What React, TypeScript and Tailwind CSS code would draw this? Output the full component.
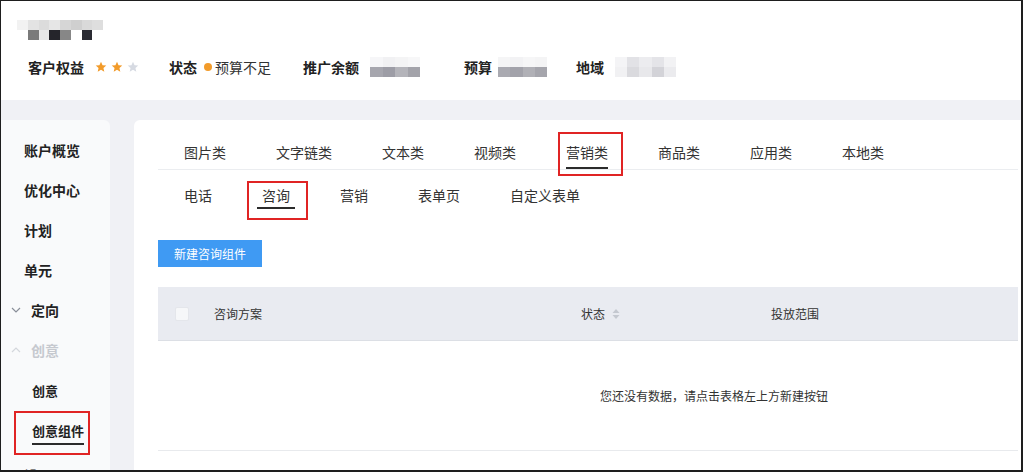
const font = "font-['Noto_Sans_CJK_SC','Noto_Sans',sans-serif]"

const nameRow1 = ['#f2f2f2', '#e3e3e3', '#dcdcdc', '#e6e6e6', '#d6d6d6', '#cfcfcf', '#d9d9d9', '#dedede']
const nameRow2 = ['#ffffff', '#7a7a7a', '#e8e8e8', '#25252b', '#878787', '#ffffff', '#2a2b33', '#ffffff']

const Blur = ({ w, top, bottom }: { w: number; top: string[]; bottom: string[] }) => (
  <div className="flex flex-col" style={{ width: w }}>
    <div className="flex h-[10px]">
      {top.map((c, i) => (
        <div key={i} className="flex-1" style={{ background: c }} />
      ))}
    </div>
    <div className="flex h-[10px]">
      {bottom.map((c, i) => (
        <div key={i} className="flex-1" style={{ background: c }} />
      ))}
    </div>
  </div>
)

const Star = ({ on }: { on: boolean }) => (
  <svg width="12" height="12" viewBox="0 0 24 24">
    <path
      d="M12 1.5l3.1 7 7.4.6-5.6 4.9 1.7 7.5L12 17.6l-6.6 3.9 1.7-7.5L1.5 9.1l7.4-.6z"
      fill={on ? '#f29b2a' : '#d6dae2'}
    />
  </svg>
)

const Chevron = ({ up, color }: { up?: boolean; color: string }) => (
  <svg width="10" height="10" viewBox="0 0 10 10">
    <path d={up ? 'M1 7l4-4 4 4' : 'M1 3l4 4 4-4'} fill="none" stroke={color} strokeWidth="1.2" />
  </svg>
)

const topTabs = ['图片类', '文字链类', '文本类', '视频类', '营销类', '商品类', '应用类', '本地类']
const subTabs = ['电话', '咨询', '营销', '表单页', '自定义表单']

export default function App() {
  return (
    <div className={`${font} w-[1023px] h-[472px] overflow-hidden bg-[#f0f1f5] border-t border-l border-r-2 border-b-2 border-[#1e1e1e] text-[#222]`}>
      {/* header */}
      <div className="h-[99px] bg-white pt-[19px] pl-[16px]">
        <Blur w={86} top={nameRow1} bottom={nameRow2} />
        <div className="mt-[17px] ml-[11px] flex items-center h-5 text-[14px] leading-5">
          <span className="font-bold">客户权益</span>
          <div className="ml-[11px] flex gap-[4px]">
            <Star on />
            <Star on />
            <Star on={false} />
          </div>
          <span className="ml-[30px] font-bold">状态</span>
          <span className="ml-[7px] w-[8px] h-[8px] rounded-full bg-[#f29b2a]" />
          <span className="ml-[3px] text-[#333]">预算不足</span>
          <span className="ml-[32px] font-bold">推广余额</span>
          <div className="ml-[11px]">
            <Blur w={50} top={['#f6f6f8', '#f1f1f3', '#f4f4f5', '#f7f7f8']} bottom={['#a6a6ae', '#9d9da6', '#b4b4ba', '#a3a3aa']} />
          </div>
          <span className="ml-[44px] font-bold">预算</span>
          <div className="ml-[6px]">
            <Blur w={49} top={['#f5f5f6', '#f2f2f4', '#f6f6f7', '#f4f4f5']} bottom={['#aaaab1', '#a2a2aa', '#b0b0b6', '#a5a5ac']} />
          </div>
          <span className="ml-[29px] font-bold">地域</span>
          <div className="ml-[11px]">
            <Blur w={61} top={['#f4f4f6', '#e2e2e6', '#ececef', '#e4e4e8', '#f2f2f4']} bottom={['#f1f1f3', '#dadade', '#e8e8eb', '#d3d3d8', '#ebebee']} />
          </div>
        </div>
      </div>

      <div className="flex pt-[20px] gap-[24px]">
        {/* sidebar */}
        <div className="w-[109px] h-[360px] bg-[#f9fafb] rounded-tr-md pt-[10px] text-[14px] leading-5 font-bold">
          {['账户概览', '优化中心', '计划', '单元'].map((t) => (
            <div key={t} className="h-10 flex items-center pl-[23px]">
              {t}
            </div>
          ))}
          <div className="h-10 flex items-center pl-[10px] gap-[10px]">
            <Chevron color="#8a8f99" />
            <span>定向</span>
          </div>
          <div className="h-10 flex items-center pl-[10px] gap-[10px] text-[#c6c9cf]">
            <Chevron up color="#d4d7dc" />
            <span>创意</span>
          </div>
          <div className="h-[42px] flex items-center pl-[31px] text-[13px] font-semibold">创意</div>
          <div className="h-[42px] flex items-center pl-[31px] text-[13px] font-semibold">
            <span className="relative inline-block pb-[2px] border-b-2 border-[#2b2b2b]">
              创意组件
              <span className="absolute -left-[18px] -right-[6px] -top-[10px] -bottom-[12px] border-2 border-[#e02424]" />
            </span>
          </div>
          <div className="h-[42px] flex items-center pl-[23px]">设置</div>
        </div>

        {/* main card */}
        <div className="flex-1 h-[360px] bg-white rounded-tl-md pl-[24px] pr-[3px] text-[#333]">
          <div className="flex gap-[50px] pl-[26px] border-b border-[#ebedf0] text-[14px] leading-5">
            {topTabs.map((t) => (
              <div
                key={t}
                className={`relative pt-[22px] pb-[5px] border-b-2 ${t === '营销类' ? 'border-[#2b2b2b]' : 'border-transparent'}`}
              >
                {t}
                {t === '营销类' && (
                  <span className="absolute -left-[8px] -right-[15px] top-[12px] -bottom-[9px] border-2 border-[#e02424]" />
                )}
              </div>
            ))}
          </div>

          <div className="flex gap-[40px] pl-[21px] pt-[15px] text-[14px] leading-5">
            {subTabs.map((t) => (
              <div
                key={t}
                className={`relative px-[5px] pb-[2px] border-b-2 ${t === '咨询' ? 'border-[#2b2b2b]' : 'border-transparent'}`}
              >
                {t}
                {t === '咨询' && (
                  <span className="absolute -left-[10px] -right-[13px] -top-[4px] -bottom-[13px] border-2 border-[#e02424]" />
                )}
              </div>
            ))}
          </div>

          <button className="mt-[31px] w-[104px] h-[27px] bg-[#3f9af3] text-white text-[12px] leading-[27px]">
            新建咨询组件
          </button>

          <div className="mt-[20px] h-[54px] bg-[#e9ebf1] border-b border-[#dcdfe5] flex items-center text-[12px]">
            <div className="w-[56px] pl-[17px]">
              <div className="w-[14px] h-[14px] bg-[#f6f7f9] border border-[#e4e6eb] rounded-[2px]" />
            </div>
            <div className="w-[367px]">咨询方案</div>
            <div className="w-[190px] flex items-center gap-[7px]">
              状态
              <svg width="8" height="12" viewBox="0 0 8 12">
                <path d="M4 1l3.5 4h-7z" fill="#c4c8d0" />
                <path d="M4 11l3.5-4h-7z" fill="#c4c8d0" />
              </svg>
            </div>
            <div>投放范围</div>
          </div>
          <div className="h-[110px] border-b border-[#e8eaed] flex items-center pl-[442px] text-[12px]">
            您还没有数据，请点击表格左上方新建按钮
          </div>
        </div>
      </div>
    </div>
  )
}
